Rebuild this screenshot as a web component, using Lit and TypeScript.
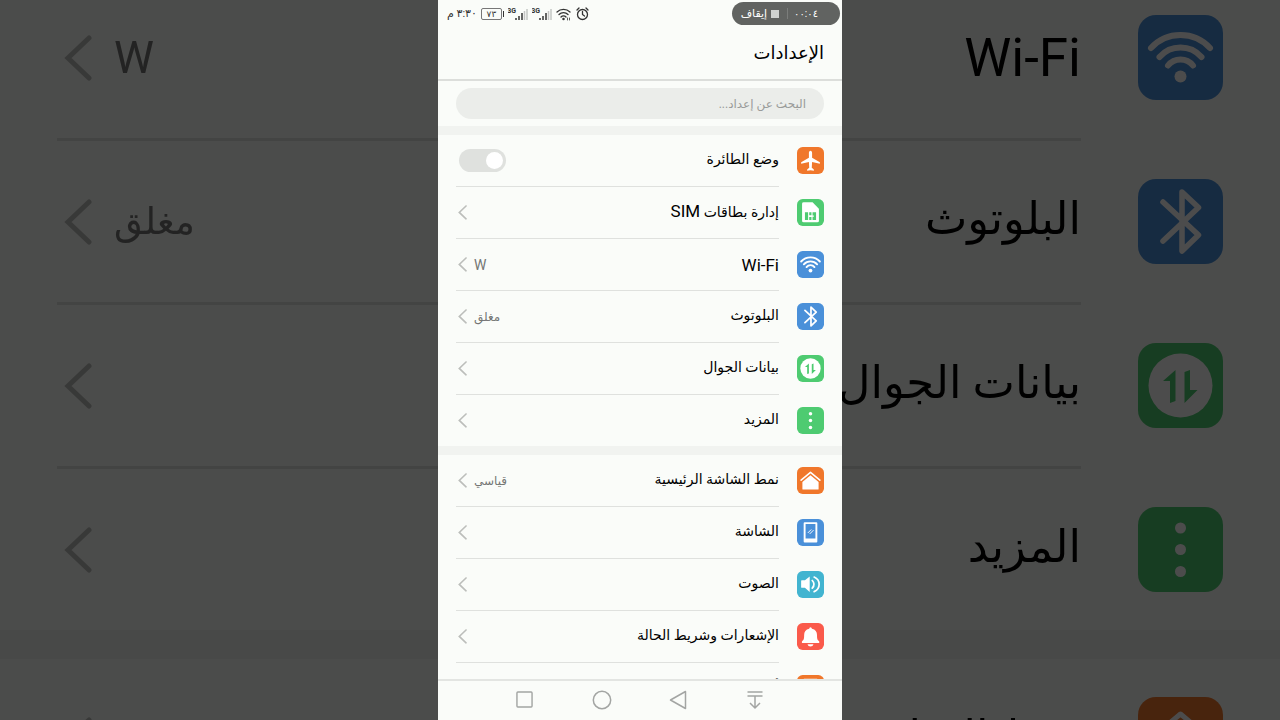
import { LitElement, html, svg, css } from "lit";
import { customElement, property } from "lit/decorators.js";
import { classMap } from "lit/directives/class-map.js";

const glyphs: Record<string, unknown> = {
  plane: svg`<path fill="#fff" d="M42.5 12c3 0 5 3 5 7v15L72 48v5l-24.5-6-1 18 6.5 6v4l-10.500-2L32 75v-4l6.500-6-1-18L13 53v-5l24.500-14V19c0-4 2-7 5-7z"/>`,
  sim: svg`<path fill="#fff" d="M21 10.500h28L69 31v38q0 4.500-5 4.500H21q-5 0-5-4.500V15q0-4.500 5-4.500z"/>
    <path fill="#4ecb71" d="M25 42h10v24H25zM38.500 42h7v9h-7zM38.500 57h7v9h-7zM49 42h11v24H49V56h4v-4h-4z"/>`,
  wifi: svg`<g fill="none" stroke="#fff" stroke-width="6" stroke-linecap="round"><path d="M13 33a40 40 0 0 1 59 0M21.500 42a28 28 0 0 1 42 0M30 50.500a16 16 0 0 1 25 0"/></g><circle cx="42.500" cy="61.500" r="6" fill="#fff"/>`,
  bluetooth: svg`<path fill="none" stroke="#fff" stroke-width="5.500" stroke-linecap="round" stroke-linejoin="round" d="M25 23l35.500 33L44 72V13l16.500 15.500L25 62"/>`,
  data: svg`<circle cx="42.500" cy="42.500" r="32" fill="#fff"/><path fill="#4ecb71" d="M37.500 27v31L32 60V38h-7zM46.500 60V29l5.500-2v20h7.500z"/>`,
  more: svg`<g fill="#fff"><circle cx="42.500" cy="21" r="5.500"/><circle cx="42.500" cy="42.500" r="5.500"/><circle cx="42.500" cy="64.500" r="5.500"/></g>`,
  home: svg`<path fill="none" stroke="#fff" stroke-width="5" stroke-linecap="round" stroke-linejoin="round" d="M13 41.500L42.500 17 72 41.500"/><path fill="#fff" d="M42.500 26L68 47v22q0 2-2 2H19q-2 0-2-2V47z"/>`,
  screen: svg`<path fill="#fff" fill-rule="evenodd" d="M24 10h37q3 0 3 3v58q0 3-3 3H24q-3 0-3-3V13q0-3 3-3zM27 16v45h31V16z"/><path fill="none" stroke="#fff" stroke-width="3" d="M34 44l11-11M40 47l12-12"/>`,
  sound: svg`<path fill="#fff" d="M15 29h10l15-12v49L25 53H15q-2 0-2-2V31q0-2 2-2z"/><path fill="none" stroke="#fff" stroke-width="5.500" stroke-linecap="round" d="M48 30q11 12 0 24M54 19c21 9 21 37 0 46"/>`,
  bell: svg`<path fill="#fff" d="M42.500 13q4 0 4.500 5c11 2 16 10 16 20 0 12 1 16 7 20v5H15.500v-5c6-4 7-8 7-20 0-10 5-18 16-20q0-5 4-5zM33 67h19q-2 7-9.500 7T33 67z"/>`,
  lock: svg`<path fill="none" stroke="#fff" stroke-width="5" d="M24 72V14h37v58z"/>`,
};

interface Item {
  icon: string;
  color: string;
  label: string;
  value?: string;
  toggle?: boolean;
}

const ORANGE = "#f0772b";
const GREEN = "#4ecb71";
const BLUE = "#4a90d9";

const network: Item[] = [
  { icon: "plane", color: ORANGE, label: "وضع الطائرة", toggle: true },
  { icon: "sim", color: GREEN, label: "إدارة بطاقات SIM" },
  { icon: "wifi", color: BLUE, label: "Wi-Fi", value: "W" },
  { icon: "bluetooth", color: BLUE, label: "البلوتوث", value: "مغلق" },
  { icon: "data", color: GREEN, label: "بيانات الجوال" },
  { icon: "more", color: GREEN, label: "المزيد" },
];

const device: Item[] = [
  { icon: "home", color: ORANGE, label: "نمط الشاشة الرئيسية", value: "قياسي" },
  { icon: "screen", color: BLUE, label: "الشاشة" },
  { icon: "sound", color: "#42b4d0", label: "الصوت" },
  { icon: "bell", color: "#fa5a4b", label: "الإشعارات وشريط الحالة" },
  { icon: "lock", color: ORANGE, label: "أمان" },
];

// Latin runs are set larger than the Arabic around them, which has taller letterforms.
const mixed = (text: string) =>
  text
    .split(/([A-Za-z-]+)/)
    .filter(Boolean)
    .map((run) => (/[A-Za-z]/.test(run) ? html`<bdi class="latin">${run}</bdi>` : run));

const isArabic = (text: string) => /[\u0600-\u06ff]/.test(text);

@customElement("settings-group")
class SettingsGroup extends LitElement {
  @property({ attribute: false }) items: Item[] = [];

  static styles = css`
    :host {
      display: block;
      flex: none;
      --row: 51px;
      --tile: 27px;
      --edge: 18px;
      --line: 1px;
      --label: 14px;
      --label-latin: 17px;
      --descent: 3px;
      --value: 12px;
      --value-latin: 14px;
      --chevron: 9px;
      --chevron-inset: 2px;
      --value-gap: 7px;
    }
    :host([large]) {
      --row: 161px;
      --tile: 85px;
      --edge: 57px;
      --line: 3px;
      --label: 45px;
      --label-latin: 53px;
      --descent: 6px;
      --value: 37px;
      --value-latin: 45px;
      --chevron: 28px;
      --chevron-inset: 7px;
      --value-gap: 22px;
    }
    .row {
      all: unset;
      box-sizing: border-box;
      display: flex;
      width: 100%;
      gap: var(--edge);
      padding: 0 var(--edge);
      cursor: pointer;
    }
    .tile {
      flex: none;
      align-self: start;
      width: var(--tile);
      height: var(--tile);
      margin-top: calc((var(--row) - var(--tile)) / 2);
    }
    .body {
      flex: 1;
      display: flex;
      align-items: center;
      height: var(--row);
      border-bottom: var(--line) solid #dfe1de;
      white-space: nowrap;
    }
    .row:last-child .body {
      border-bottom: 0;
    }
    .label {
      flex: 1;
      color: #000;
      font-size: var(--label);
    }
    .label.arabic {
      padding-bottom: var(--descent);
    }
    .label .latin {
      font-size: var(--label-latin);
    }
    .value {
      color: #747674;
      font-size: var(--value);
      margin-inline-end: var(--value-gap);
    }
    .value .latin {
      font-size: var(--value-latin);
    }
    .chevron {
      width: var(--chevron);
      margin-inline-end: var(--chevron-inset);
      fill: none;
      stroke: #bcbebb;
      stroke-width: 5;
      stroke-linecap: round;
    }
    .switch {
      appearance: none;
      box-sizing: border-box;
      width: 47px;
      height: 23px;
      margin: 0;
      margin-inline-end: 3px;
      padding: 3px;
      border-radius: 12px;
      background: #dfe1de;
    }
    .switch::before {
      content: "";
      display: block;
      width: 17px;
      height: 17px;
      border-radius: 9px;
      background: #fff;
    }
    .switch:checked::before {
      margin-inline-start: auto;
    }
  `;

  private tile(item: Item) {
    return html`<svg class="tile" viewBox="0 0 85 85" aria-hidden="true">
      <rect width="85" height="85" rx="18" fill=${item.color} />${glyphs[item.icon]}
    </svg>`;
  }

  private label(item: Item) {
    return html`<span class=${classMap({ label: true, arabic: isArabic(item.label) })}>${mixed(item.label)}</span>`;
  }

  render() {
    return this.items.map((item) =>
      item.toggle
        ? html`<label class="row">
            ${this.tile(item)}
            <span class="body">${this.label(item)}<input class="switch" type="checkbox" /></span>
          </label>`
        : html`<button class="row" type="button">
            ${this.tile(item)}
            <span class="body">
              ${this.label(item)}
              ${item.value ? html`<span class="value">${mixed(item.value)}</span>` : ""}
              <svg class="chevron" viewBox="0 0 28 46" aria-hidden="true"><path d="M25 3L4 23l21 20" /></svg>
            </span>
          </button>`
    );
  }
}

@customElement("app-root")
class AppRoot extends LitElement {
  static styles = css`
    :host {
      display: grid;
      justify-items: center;
      height: 100vh;
      overflow: hidden;
      background: #4b4b4b;
      direction: rtl;
      font-family: Roboto, "DejaVu Sans", sans-serif;
    }
    .backdrop,
    .phone {
      grid-area: 1 / 1;
      background: #fafcf9;
      overflow: hidden;
    }
    .backdrop {
      width: 100%;
      height: 100vh;
      filter: brightness(0.3);
    }
    .magnified {
      margin-top: -23px;
    }
    .divider {
      flex: none;
      height: 9px;
      background: #f1f3f0;
    }
    .divider.large {
      height: 29px;
    }
    .phone {
      position: relative;
      display: flex;
      flex-direction: column;
      height: 100vh;
      aspect-ratio: 101 / 180;
    }
    .status {
      flex: none;
      display: flex;
      justify-content: space-between;
      align-items: center;
      height: 27px;
      padding: 0 2px 0 9px;
      font-size: 11px;
      color: #333;
    }
    .recorder {
      all: unset;
      box-sizing: border-box;
      display: flex;
      align-items: center;
      height: 23px;
      padding: 0 22px 0 9px;
      border-radius: 12px;
      background: #616361;
      color: #fff;
    }
    .elapsed {
      padding-inline-end: 6px;
      margin-inline-end: 8px;
      border-inline-end: 1px solid #7b7d7b;
      font-size: 10px;
    }
    .stop {
      width: 8px;
      height: 8px;
      margin-inline-end: 4px;
      background: #d0d2d0;
    }
    .indicators {
      display: flex;
      align-items: center;
      gap: 4px;
    }
    .battery {
      display: flex;
      align-items: center;
      direction: ltr;
      gap: 1px;
    }
    .level {
      box-sizing: border-box;
      width: 21px;
      height: 12px;
      border: 1px solid #777;
      border-radius: 2px;
      font-size: 9px;
      line-height: 10px;
      text-align: center;
    }
    .cap {
      width: 1px;
      height: 6px;
      background: #333;
    }
    .title {
      flex: none;
      margin: 0;
      padding: 0 18px;
      border-bottom: 2px solid #dcdedb;
      color: #000;
      font-size: 18px;
      font-weight: 400;
      line-height: 52px;
    }
    .search {
      flex: none;
      display: flex;
      padding: 7px 18px;
    }
    .field {
      flex: 1;
      box-sizing: border-box;
      min-width: 0;
      height: 31px;
      padding: 0 18px;
      border: 0;
      border-radius: 16px;
      background: #ebedea;
      color: #000;
      font: inherit;
      font-size: 12px;
    }
    .field::placeholder {
      color: #999b99;
      opacity: 1;
    }
    .list {
      flex: 1;
      min-height: 0;
      overflow: hidden;
    }
    .nav {
      flex: none;
      display: flex;
      justify-content: center;
      height: 37px;
      padding-bottom: 2px;
      border-top: 2px solid #e3e5e2;
    }
    .key {
      all: unset;
      display: grid;
      place-items: center;
      width: 19%;
      cursor: pointer;
    }
    .key svg {
      fill: none;
      stroke: #a3a5a3;
      stroke-width: 1.5;
      stroke-linejoin: round;
    }
  `;

  private signal() {
    return html`<svg width="20" height="14" viewBox="0 0 20 14" role="img" aria-label="3G">
      <text x="8" y="6" font-size="7" font-weight="700" fill="#333">3G</text>
      <path stroke="#333" stroke-width="1.5" d="M8 13v-2M11 13V9M14 13V6" />
      <path stroke="#c4c6c4" stroke-width="1.5" d="M16.500 13V4M19 13V2" />
    </svg>`;
  }

  render() {
    return html`
      <div class="backdrop" aria-hidden="true" inert>
        <div class="magnified">
          <settings-group large .items=${network.slice(2)}></settings-group>
          <div class="divider large"></div>
          <settings-group large .items=${device.slice(0, 1)}></settings-group>
        </div>
      </div>
      <main class="phone">
        <div class="status">
          <button class="recorder" type="button">
            <span class="elapsed">٠٠:٠٤</span><span class="stop"></span><span>إيقاف</span>
          </button>
          <div class="indicators">
            <svg width="13" height="14" viewBox="0 0 13 14" fill="none" stroke="#333" stroke-width="1.3" stroke-linecap="round">
              <circle cx="6.500" cy="7.500" r="5" /><path d="M6.500 4.500v3l2 1.500M1 3l2-2M12 3l-2-2" />
            </svg>
            <svg width="16" height="14" viewBox="0 0 16 14" fill="none" stroke="#333" stroke-width="1.3" stroke-linecap="round">
              <path d="M1 5a9.500 9.500 0 0 1 13 0M3 7.500a6.500 6.500 0 0 1 9 0M5 10a3.500 3.500 0 0 1 5 0" />
              <circle cx="7.500" cy="12" r=".6" /><path stroke-width=".8" d="M11.500 11v2M13.500 11v2" />
            </svg>
            ${this.signal()} ${this.signal()}
            <span class="battery"><span class="level">٧٣</span><span class="cap"></span></span>
            <span>٣:٣٠ م</span>
          </div>
        </div>
        <h1 class="title">الإعدادات</h1>
        <div class="search">
          <input class="field" type="search" aria-label="البحث عن إعداد" placeholder="البحث عن إعداد..." />
        </div>
        <div class="divider"></div>
        <div class="list">
          <settings-group .items=${network}></settings-group>
          <div class="divider"></div>
          <settings-group .items=${device}></settings-group>
        </div>
        <nav class="nav">
          <button class="key" type="button" aria-label="إظهار الإشعارات">
            <svg width="18" height="20" viewBox="0 0 18 20"><path d="M1.500 2h15M1.500 6h15M9 6v12M4 13l5 5 5-5" /></svg>
          </button>
          <button class="key" type="button" aria-label="رجوع">
            <svg width="18" height="20" viewBox="0 0 18 20"><path d="M16.500 1.500v17L1.500 10z" /></svg>
          </button>
          <button class="key" type="button" aria-label="الرئيسية">
            <svg width="20" height="20" viewBox="0 0 20 20"><circle cx="10" cy="10" r="8.700" /></svg>
          </button>
          <button class="key" type="button" aria-label="التطبيقات الأخيرة">
            <svg width="17" height="17" viewBox="0 0 18 18"><rect x="1" y="1" width="16" height="16" rx="1" /></svg>
          </button>
        </nav>
      </main>
    `;
  }
}
